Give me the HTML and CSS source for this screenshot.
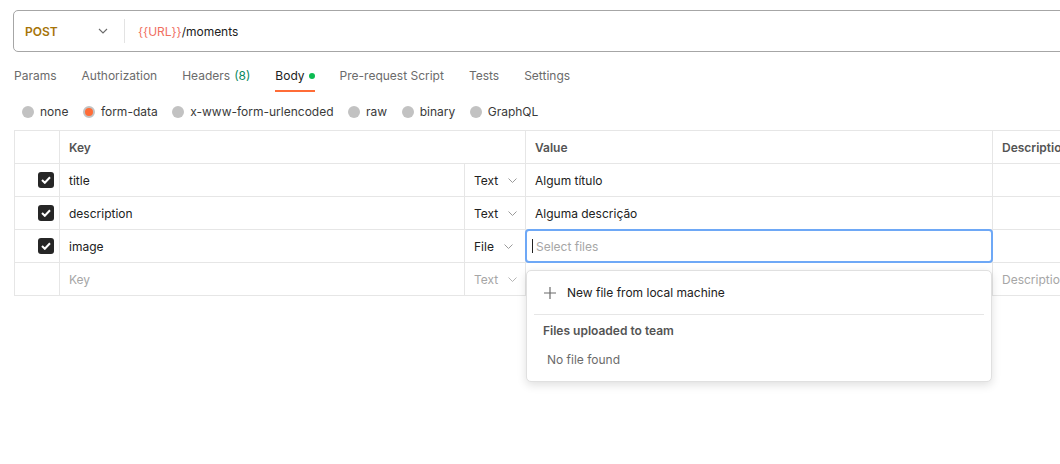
FILE: index.html
```html
<!DOCTYPE html>
<html>
<head>
<meta charset="utf-8">
<link rel="stylesheet" href="styles.css">
</head>
<body>
<div class="page">
  <div class="urlbar">
    <div class="method">
      <span class="method-name">POST</span>
      <svg class="chev" width="10" height="6" viewBox="0 0 10 6"><path d="M1 1l4 4 4-4" fill="none" stroke="#6b6b6b" stroke-width="1.1"/></svg>
    </div>
    <div class="divider"></div>
    <div class="url"><span class="var">{{URL}}</span>/moments</div>
  </div>

  <div class="tabs">
    <div class="tab">Params</div>
    <div class="tab">Authorization</div>
    <div class="tab">Headers <span class="count">(8)</span></div>
    <div class="tab active">Body <span class="dot"></span></div>
    <div class="tab">Pre-request Script</div>
    <div class="tab">Tests</div>
    <div class="tab">Settings</div>
  </div>

  <div class="radios">
    <label class="radio"><span class="circle"></span>none</label>
    <label class="radio"><span class="circle on"></span>form-data</label>
    <label class="radio"><span class="circle"></span>x-www-form-urlencoded</label>
    <label class="radio"><span class="circle"></span>raw</label>
    <label class="radio"><span class="circle"></span>binary</label>
    <label class="radio"><span class="circle"></span>GraphQL</label>
  </div>

  <div class="table">
    <div class="row head">
      <div class="c-check"></div>
      <div class="c-keyfull">Key</div>
      <div class="c-value">Value</div>
      <div class="c-desc">Description</div>
    </div>
    <div class="row">
      <div class="c-check"><span class="cb"><svg width="10" height="8" viewBox="0 0 10 8"><path d="M1 4l2.8 2.8L9 1.3" fill="none" stroke="#fff" stroke-width="2"/></svg></span></div>
      <div class="c-key">title</div>
      <div class="c-type">Text<svg class="chev-s" width="9" height="5" viewBox="0 0 9 5"><path d="M.5.5l4 4 4-4" fill="none" stroke="#9a9a9a" stroke-width="1"/></svg></div>
      <div class="c-value">Algum título</div>
      <div class="c-desc"></div>
    </div>
    <div class="row">
      <div class="c-check"><span class="cb"><svg width="10" height="8" viewBox="0 0 10 8"><path d="M1 4l2.8 2.8L9 1.3" fill="none" stroke="#fff" stroke-width="2"/></svg></span></div>
      <div class="c-key">description</div>
      <div class="c-type">Text<svg class="chev-s" width="9" height="5" viewBox="0 0 9 5"><path d="M.5.5l4 4 4-4" fill="none" stroke="#9a9a9a" stroke-width="1"/></svg></div>
      <div class="c-value">Alguma descrição</div>
      <div class="c-desc"></div>
    </div>
    <div class="row">
      <div class="c-check"><span class="cb"><svg width="10" height="8" viewBox="0 0 10 8"><path d="M1 4l2.8 2.8L9 1.3" fill="none" stroke="#fff" stroke-width="2"/></svg></span></div>
      <div class="c-key">image</div>
      <div class="c-type">File<svg class="chev-s" width="9" height="5" viewBox="0 0 9 5"><path d="M.5.5l4 4 4-4" fill="none" stroke="#9a9a9a" stroke-width="1"/></svg></div>
      <div class="c-value focus-cell">
        <div class="file-input"><span class="caret"></span><span class="ph">Select files</span></div>
        <div class="menu">
          <div class="menu-item">
            <svg width="14" height="14" viewBox="0 0 14 14"><path d="M7 1v12M1 7h12" stroke="#6b6b6b" stroke-width="1.2"/></svg>
            <span>New file from local machine</span>
          </div>
          <div class="menu-sep"></div>
          <div class="menu-title">Files uploaded to team</div>
          <div class="menu-empty">No file found</div>
        </div>
      </div>
      <div class="c-desc"></div>
    </div>
    <div class="row">
      <div class="c-check"></div>
      <div class="c-key ph">Key</div>
      <div class="c-type ph">Text<svg class="chev-s" width="9" height="5" viewBox="0 0 9 5"><path d="M.5.5l4 4 4-4" fill="none" stroke="#b5b5b5" stroke-width="1"/></svg></div>
      <div class="c-value"></div>
      <div class="c-desc ph">Description</div>
    </div>
  </div>
</div>
</body>
</html>
```

FILE: styles.css
```css
html, body {
  margin: 0;
  padding: 0;
  background: #fff;
  overflow: hidden;
}
body {
  font-family: Inter, "Noto Sans", sans-serif;
  color: #212121;
  width: 1060px;
  height: 464px;
}
.page {
  width: 1300px;
  padding: 10px 0 0 13px;
}
.urlbar {
  display: flex;
  align-items: center;
  height: 40px;
  border: 1px solid #a6a6a6;
  border-radius: 5px;
}
.method {
  display: flex;
  align-items: center;
  width: 99px;
  padding-left: 11px;
  box-sizing: border-box;
}
.method-name {
  font-size: 12px;
  font-weight: 600;
  color: #a67408;
  flex: 1;
}
.chev { margin-right: 5px; }
.divider {
  width: 1px;
  height: 24px;
  background: #e3e3e3;
  margin-left: 11px;
}
.url {
  font-size: 12px;
  margin-left: 13px;
  color: #212121;
  letter-spacing: -0.03px;
}
.var { color: #f06f5f; }

.tabs {
  display: flex;
  margin-top: 15px;
  margin-left: 1px;
  height: 27px;
}
.tab {
  font-size: 12px;
  color: #6b6b6b;
  margin-right: 25px;
  height: 25px;
  display: flex;
  align-items: flex-start;
  line-height: 17px;
}
.tab .count { color: #0a8a5f; margin-left: 4px; }
.tab.active {
  color: #212121;
  border-bottom: 2px solid #ff6c37;
  padding-bottom: 6px;
  height: 17px;
}
.dot {
  width: 6px;
  height: 6px;
  border-radius: 50%;
  background: #0cbb52;
  margin-left: 4px;
  margin-top: 6px;
}
.radios {
  display: flex;
  margin-top: 9px;
  margin-left: 9px;
  height: 17px;
  align-items: center;
}
.radio {
  display: flex;
  align-items: center;
  font-size: 12px;
  color: #3a3a3a;
  margin-right: 14.5px;
}
.circle {
  width: 12px;
  height: 12px;
  border-radius: 50%;
  background: #c2c2c2;
  margin-right: 6px;
  box-sizing: border-box;
}
.circle.on {
  background: #ff6c37;
  border: 2px solid #c2c2c2;
}
.table {
  margin-top: 10px;
  margin-left: 1px;
  border-top: 1px solid #e6e6e6;
  border-left: 1px solid #e6e6e6;
  width: 1200px;
}
.row {
  display: flex;
  height: 33px;
  font-size: 12px;
  color: #212121;
}
.row > div {
  border-right: 1px solid #e6e6e6;
  border-bottom: 1px solid #e6e6e6;
  box-sizing: border-box;
  display: flex;
  align-items: center;
}
.c-check { width: 45px; justify-content: flex-end; padding-right: 5px; }
.c-key { width: 405px; padding-left: 9px; }
.c-keyfull { width: 466px; padding-left: 9px; }
.c-type { width: 61px; padding-left: 9px; }
.c-value { width: 467px; padding-left: 9px; }
.c-desc { width: 220px; padding-left: 9px; }
.head > div {
  font-weight: 600;
  color: #545454;
}
.cb {
  width: 16px;
  height: 16px;
  border-radius: 3px;
  background: #262626;
  display: flex;
  align-items: center;
  justify-content: center;
}
.chev-s { margin-left: 10px; }
.ph { color: #a6a6a6; }
.row > .ph { color: #a6a6a6; }
.focus-cell {
  position: relative;
  padding-left: 0 !important;
}
.file-input {
  position: absolute;
  left: -1px;
  top: -1px;
  right: -1px;
  bottom: -1px;
  border: 2px solid #6ea8f6;
  border-radius: 4px;
  display: flex;
  align-items: center;
  padding-left: 5px;
  background: #fff;
}
.caret {
  width: 1px;
  height: 14px;
  background: #212121;
  margin-right: 3px;
}
.menu {
  position: absolute;
  left: 0;
  top: 40px;
  width: 466px;
  height: 112px;
  box-sizing: border-box;
  background: #fff;
  border: 1px solid #e0e0e0;
  border-radius: 5px;
  box-shadow: 0 3px 10px rgba(0, 0, 0, 0.13);
  z-index: 5;
  padding: 0 7px;
  font-size: 12px;
}
.menu-item {
  display: flex;
  align-items: center;
  height: 43px;
  padding-left: 9px;
  color: #212121;
}
.menu-item svg { margin-right: 10px; }
.menu-sep {
  height: 1px;
  background: #e6e6e6;
}
.menu-title {
  font-weight: 600;
  color: #545454;
  font-size: 12px;
  margin-top: 8px;
  padding-left: 9px;
}
.menu-empty {
  color: #6b6b6b;
  margin-top: 14px;
  padding-left: 13px;
}
```
